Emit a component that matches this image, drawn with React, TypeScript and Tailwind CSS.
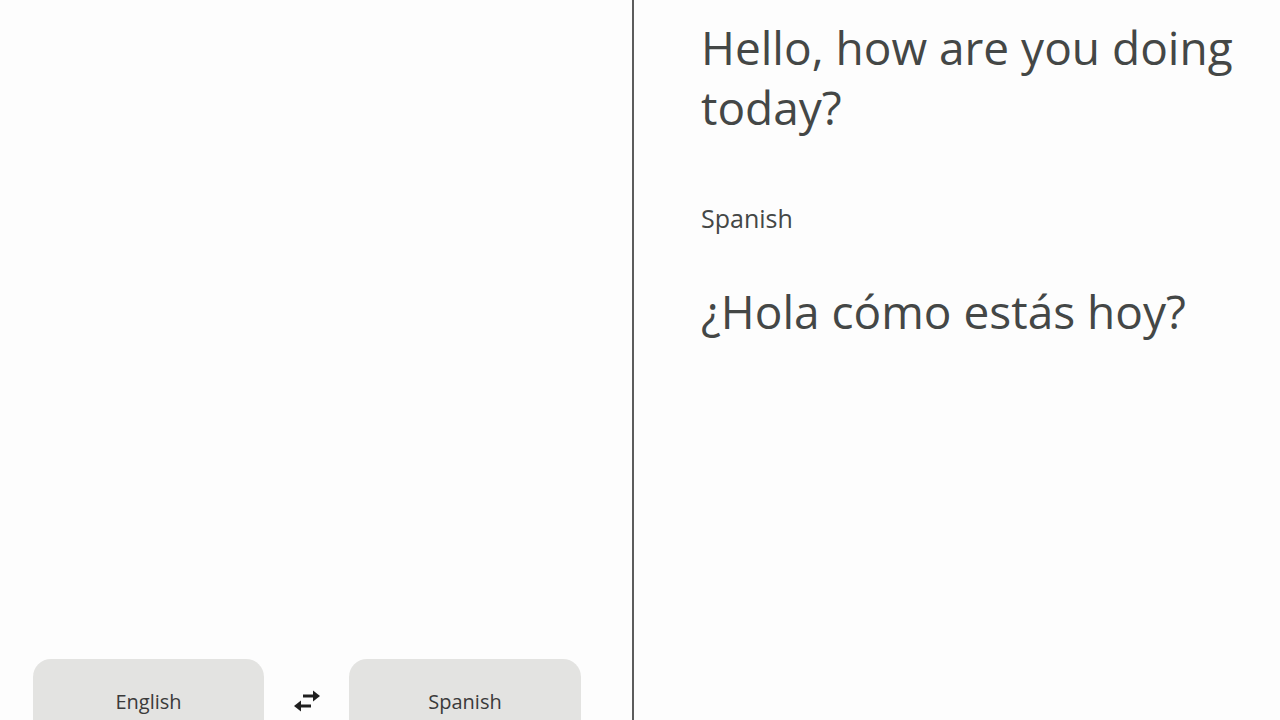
import { ReactNode } from "react";

const font = "font-['Open_Sans','Liberation_Sans',sans-serif]";

// Two offset arrows, top one pointing right, bottom one pointing left
function SwapIcon() {
  return (
    <svg width="32" height="24" viewBox="0 0 32 24" fill="none">
      <path d="M12 7h12" stroke="#1f1f1f" strokeWidth="3" />
      <path d="M22 1.5L29 7l-7 5.5z" fill="#1f1f1f" />
      <path d="M20 17H8" stroke="#1f1f1f" strokeWidth="3" />
      <path d="M10 11.5L3 17l7 5.5z" fill="#1f1f1f" />
    </svg>
  );
}

function LangButton({ children, width }: { children: ReactNode; width: string }) {
  return (
    <button
      className={`${width} h-[61px] rounded-t-[18px] bg-[#e3e3e1] pt-[25px] text-[20px] leading-6 text-[#3a3a3a] ${font}`}
    >
      {children}
    </button>
  );
}

export default function App() {
  return (
    <div className={`flex h-[720px] w-[1280px] overflow-hidden bg-[#fdfdfd] ${font}`}>
      {/* Left pane: input side with language chips at the bottom */}
      <div className="flex w-[632px] flex-col">
        <div className="flex-1" />
        <div className="flex items-end pl-[33px]">
          <LangButton width="w-[231px]">English</LangButton>
          <div className="flex h-[61px] w-[85px] items-start justify-center pt-[30px]">
            <SwapIcon />
          </div>
          <LangButton width="w-[232px]">Spanish</LangButton>
        </div>
      </div>

      <div className="w-[2px] bg-[#5c5c5c]" />

      {/* Right pane: transcript and translation */}
      <div className="flex-1 pl-[67px] pr-10 pt-[17px] text-[#444746]">
        <p className="text-[46px] leading-[60px]">Hello, how are you doing today?</p>
        <p className="mt-[67px] text-[25px] leading-7">Spanish</p>
        <p className="mt-[49px] text-[46px] leading-[60px]">¿Hola cómo estás hoy?</p>
      </div>
    </div>
  );
}
